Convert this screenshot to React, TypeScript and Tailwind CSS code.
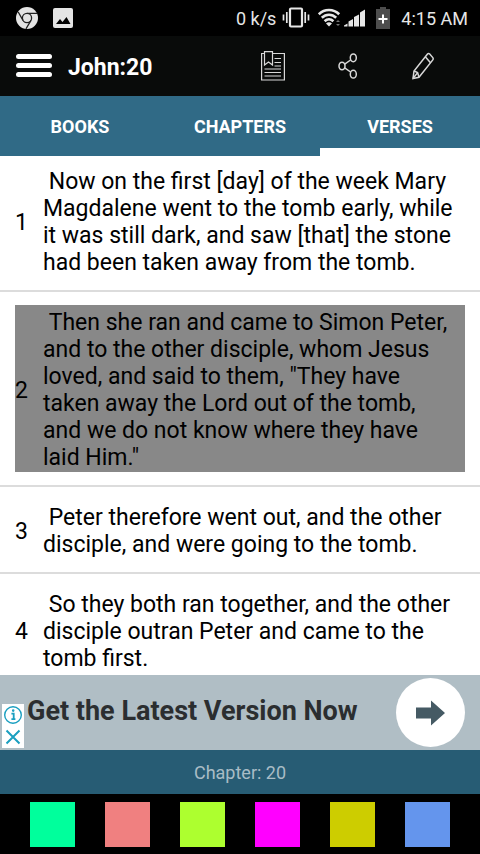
import { useState } from "react";

interface Verse {
  number: number;
  text: string;
}

const verses: Verse[] = [
  {
    number: 1,
    text: "Now on the first [day] of the week Mary Magdalene went to the tomb early, while it was still dark, and saw [that] the stone had been taken away from the tomb.",
  },
  {
    number: 2,
    text: 'Then she ran and came to Simon Peter, and to the other disciple, whom Jesus loved, and said to them, "They have taken away the Lord out of the tomb, and we do not know where they have laid Him."',
  },
  {
    number: 3,
    text: "Peter therefore went out, and the other disciple, and were going to the tomb.",
  },
  {
    number: 4,
    text: "So they both ran together, and the other disciple outran Peter and came to the tomb first.",
  },
];

const tabs = ["BOOKS", "CHAPTERS", "VERSES"];

const colors = [
  { name: "Green", className: "bg-[#00ff9c]" },
  { name: "Coral", className: "bg-[#f08080]" },
  { name: "Lime", className: "bg-[#adff2f]" },
  { name: "Magenta", className: "bg-[#ff00ff]" },
  { name: "Yellow", className: "bg-[#cdcd00]" },
  { name: "Blue", className: "bg-[#6495ed]" },
];

export default function App() {
  const [activeTab, setActiveTab] = useState("VERSES");
  const [selected, setSelected] = useState(2);

  return (
    <div className="flex h-screen flex-col bg-white font-['Roboto',sans-serif] text-black">
      <StatusBar />

      {/* Toolbar */}
      <header className="flex h-15 shrink-0 items-center bg-[#090b0a] pl-4 text-white">
        <button aria-label="Menu" className="flex h-9 w-9 items-center">
          <svg width="36" height="24" viewBox="0 0 36 24" fill="#fff">
            <rect x="0" y="0" width="36" height="5" rx="2.5" />
            <rect x="0" y="9" width="36" height="5" rx="2.5" />
            <rect x="0" y="18" width="36" height="5" rx="2.5" />
          </svg>
        </button>
        <h1 className="ml-4 flex-1 pt-1 text-[23px] font-bold">John:20</h1>
        <div className="flex items-center pr-5">
          <button aria-label="Notes" className="flex w-[75px] justify-center">
            <NotesIcon />
          </button>
          <button aria-label="Share" className="flex w-[75px] justify-center">
            <ShareIcon />
          </button>
          <button aria-label="Edit" className="flex w-[75px] justify-center">
            <PencilIcon />
          </button>
        </div>
      </header>

      {/* Tabs */}
      <nav className="grid h-15 shrink-0 grid-cols-3 bg-[#306a86]">
        {tabs.map((tab) => (
          <button
            key={tab}
            onClick={() => setActiveTab(tab)}
            className={`border-b-8 pt-2.5 text-lg font-bold text-white ${
              tab === activeTab ? "border-white" : "border-transparent"
            }`}
          >
            {tab}
          </button>
        ))}
      </nav>

      {/* Verses */}
      <ul className="min-h-0 flex-1 overflow-y-auto [scrollbar-width:none]">
        {verses.map((verse) => (
          <li
            key={verse.number}
            className="border-b-2 border-[#dcdcdc] px-[15px] py-[13px] first:pt-2"
          >
            <button
              onClick={() => setSelected(verse.number)}
              className={`flex w-full items-center pt-1 pr-2 pb-px text-left text-[23px] leading-[27px] ${
                verse.number === selected ? "bg-[#888888]" : ""
              }`}
            >
              <span className="w-7 shrink-0">{verse.number}</span>
              <span className="flex-1 whitespace-pre-wrap">
                {" " + verse.text}
              </span>
            </button>
          </li>
        ))}
      </ul>

      {/* Ad */}
      <div className="relative flex h-[75px] shrink-0 items-center bg-[#b0bec5] pr-[15px] pl-[27px]">
        <p className="flex-1 pb-0.5 text-[27px] font-bold text-[#2b2e30]">
          Get the Latest Version Now
        </p>
        <button
          aria-label="Open"
          className="flex h-[69px] w-[69px] items-center justify-center rounded-full bg-white"
        >
          <svg width="30" height="26" viewBox="0 0 30 26" fill="#455a64">
            <path d="M0 7.5H15V0.5L29 13L15 25.5V18.5H0Z" />
          </svg>
        </button>
        <div className="absolute bottom-0.5 left-0.5 flex h-11 w-[22px] flex-col bg-white">
          <button
            aria-label="Ad information"
            className="flex flex-1 items-center justify-center"
          >
            <svg width="20" height="20" viewBox="0 0 20 20" fill="none" stroke="#1a9fc0">
              <circle cx="10" cy="10" r="8.3" strokeWidth="1.4" />
              <path d="M8.4 8.6H10.7V14M8.4 14.2H12.4" strokeWidth="1.8" />
              <circle cx="10.2" cy="5.6" r="0.7" strokeWidth="1.2" />
            </svg>
          </button>
          <button
            aria-label="Close ad"
            className="flex flex-1 items-center justify-center"
          >
            <svg width="16" height="16" viewBox="0 0 16 16" stroke="#1a9fc0" strokeWidth="2">
              <path d="M1.5 1.5L14.5 14.5M14.5 1.5L1.5 14.5" />
            </svg>
          </button>
        </div>
      </div>

      <div className="flex h-11 shrink-0 items-center justify-center bg-[#275c74] pt-0.5 text-lg text-[#a9bcc6]">
        Chapter: 20
      </div>

      {/* Highlight colors */}
      <div className="flex h-15 shrink-0 justify-between bg-black px-[30px] pt-2">
        {colors.map((color) => (
          <button
            key={color.name}
            aria-label={color.name}
            className={`h-[45px] w-[45px] ${color.className}`}
          />
        ))}
      </div>
    </div>
  );
}

function StatusBar() {
  return (
    <div className="flex h-9 shrink-0 items-center bg-black pr-3 pl-4 text-lg text-[#e6e6e6]">
      <svg width="22" height="22" viewBox="0 0 22 22">
        <circle cx="11" cy="11" r="11" fill="#e4e4e4" />
        <g fill="none" stroke="#222" strokeWidth="1.3">
          <circle cx="11" cy="11" r="4.6" />
          <path d="M11 6.4H21M7 13.3L2.2 5M15 13.3L10 21.8" />
        </g>
      </svg>
      <svg className="ml-[15px]" width="20" height="20" viewBox="0 0 20 20">
        <rect width="20" height="20" rx="2" fill="#e4e4e4" />
        <path d="M3 16L7 11L9.5 14L13.5 9L17.5 16Z" fill="#000" />
      </svg>

      <span className="ml-auto pt-0.5">0 k/s</span>

      {/* vibrate */}
      <svg className="ml-1.5" width="28" height="22" viewBox="0 0 28 22" fill="none" stroke="#e6e6e6">
        <rect x="8" y="1.5" width="12" height="18" rx="1" strokeWidth="2.2" />
        <path d="M4.8 5V16M23.2 5V16" strokeWidth="1.7" />
        <path d="M1.5 7.5V13.5M26.5 7.5V13.5" strokeWidth="1.7" />
      </svg>

      {/* wifi and signal */}
      <svg className="ml-2" width="48" height="20" viewBox="0 0 48 20">
        <g fill="none" stroke="#e6e6e6" strokeWidth="2.6">
          <path d="M0.8 6.2C6.5 0.6 15.5 0.6 21.2 6.2" />
          <path d="M3.8 9.8C8 5.8 14 5.8 18.2 9.8" />
          <path d="M6.6 13.2C9.2 10.8 12.8 10.8 15.4 13.2" />
        </g>
        <path d="M8 15.4C9.8 13.9 12.2 13.9 14 15.4L11 18.6Z" fill="#e6e6e6" />
        <path d="M18 14L20 12L22 14ZM18 16L20 18L22 16Z" fill="#777" />
        <path
          d="M26 18.5V17.5L29.5 15.5V18.5ZM30.5 18.5V13.5L35 11V18.5ZM36 18.5V9L41 6.5V18.5ZM42 18.5V4.5L47 1.5V18.5Z"
          fill="#e6e6e6"
        />
      </svg>

      {/* battery */}
      <svg className="ml-2.5" width="14" height="22" viewBox="0 0 14 22">
        <path d="M0 2H4V0H10V2H14V22H0Z" fill="#4d4d4d" />
        <path d="M7 7.5V16.5M2.5 12H11.5" stroke="#fff" strokeWidth="2" />
      </svg>

      <span className="ml-[11px] pt-0.5">4:15 AM</span>
    </div>
  );
}

function NotesIcon() {
  return (
    <svg width="24" height="30" viewBox="0 0 24 30" fill="none" stroke="#d8d8d8" strokeWidth="1.2">
      <path d="M3.5 2.5H0.6V29H23.4V2.5H11.5" />
      <path d="M3.5 0.6H11.5V14L7.5 11L3.5 14Z" />
      <path d="M13.5 7.5H20M13.5 11.5H20M13.5 15H20M3.5 18H20M3.5 21.5H20M3.5 25H20" />
    </svg>
  );
}

function ShareIcon() {
  return (
    <svg width="20" height="26" viewBox="0 0 20 26" fill="none" stroke="#d8d8d8" strokeWidth="1.5">
      <ellipse cx="4" cy="13" rx="3" ry="3.8" />
      <ellipse cx="15.3" cy="4.8" rx="3" ry="3.9" />
      <ellipse cx="15.3" cy="21.2" rx="3" ry="3.9" />
      <path d="M6.7 11.2L12.6 7M6.7 14.8L12.6 19" />
    </svg>
  );
}

function PencilIcon() {
  return (
    <svg width="22" height="28" viewBox="0 0 22 28" fill="none" stroke="#d8d8d8" strokeWidth="1.5">
      <path d="M1 26.5L2 19L15.5 2Q16.5 0.8 17.7 2L20.8 5.6Q21.6 6.7 20.8 7.9L7 25.2Z" />
      <path d="M2 19L5.6 20.6L7 25.2M13.3 4.8L18.5 10.8M1 26.5L5.6 20.6" />
    </svg>
  );
}
